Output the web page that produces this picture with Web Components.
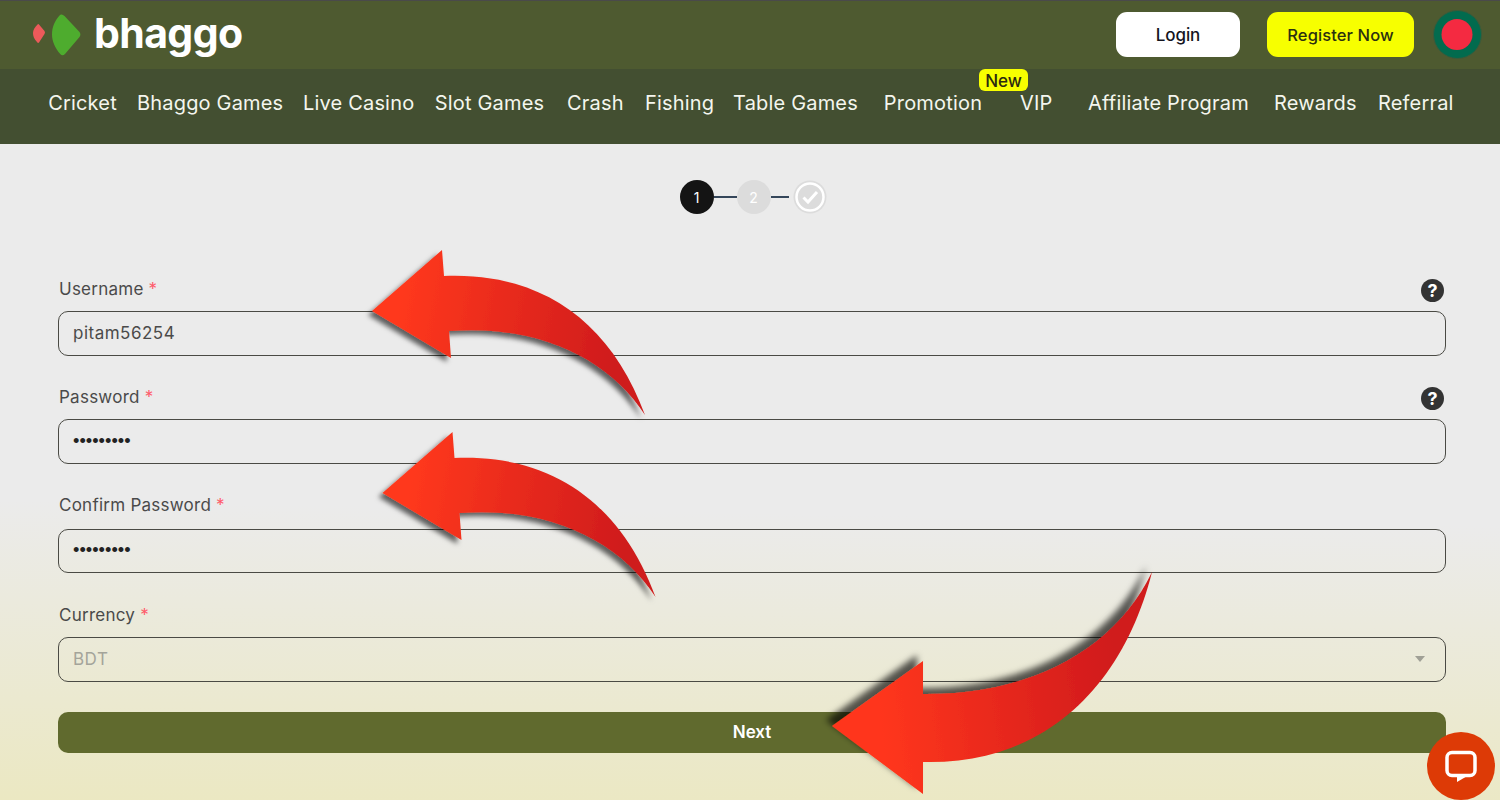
<!DOCTYPE html>
<html>
<head>
<meta charset="utf-8">
<style>
  html, body { margin: 0; height: 100%; overflow: hidden; }
  body { font-family: "Inter", "Liberation Sans", sans-serif; background: #ebebeb; }
  #page { position: relative; width: 1500px; height: 800px; display: flex; flex-direction: column; overflow: hidden; }
</style>
</head>
<body>
<div id="page">
  <bhaggo-header></bhaggo-header>
  <bhaggo-nav>
    <nav-item w="69" ml="48">Cricket</nav-item>
    <nav-item w="146" ml="20">Bhaggo Games</nav-item>
    <nav-item w="111" ml="20">Live Casino</nav-item>
    <nav-item w="111" ml="20">Slot Games</nav-item>
    <nav-item w="56" ml="22">Crash</nav-item>
    <nav-item w="67" ml="22">Fishing</nav-item>
    <nav-item w="125" ml="21">Table Games</nav-item>
    <nav-item w="100" ml="25">Promotion</nav-item>
    <nav-item w="31" ml="37" badge="New">VIP</nav-item>
    <nav-item w="161" ml="37">Affiliate Program</nav-item>
    <nav-item w="79" ml="25">Rewards</nav-item>
    <nav-item w="74" ml="25">Referral</nav-item>
  </bhaggo-nav>
  <signup-form>
    <step-bar></step-bar>
    <form-field label="Username" value="pitam56254" help style="margin-top:64px"></form-field>
    <form-field label="Password" value="•••••••••" secret help style="margin-top:30px"></form-field>
    <form-field label="Confirm Password" value="•••••••••" secret style="margin-top:30px;--h:44px;--top:35px"></form-field>
    <form-field label="Currency" value="BDT" select style="margin-top:31px"></form-field>
    <next-button style="margin-top:30px">Next</next-button>
  </signup-form>
  <red-arrows></red-arrows>
  <chat-bubble></chat-bubble>
</div>

<script>
const FONT = '"Inter", "Liberation Sans", sans-serif';

class BhaggoHeader extends HTMLElement {
  connectedCallback() {
    this.attachShadow({ mode: 'open' }).innerHTML = `
    <style>
      :host { display: flex; align-items: center; height: 68px; background: #4e5a30; border-top: 1px solid #4a4a4a; font-family: ${FONT}; flex: none; }
      .logo { display: flex; align-items: center; margin-left: 33px; }
      .word { color: #fff; font-weight: 700; font-size: 41px; letter-spacing: -0.6px; margin-left: 13px; line-height: 40px; position: relative; top: -2px; }
      .actions { margin-left: auto; display: flex; align-items: center; margin-right: 18px; margin-bottom: 2px; }
      .btn { display: flex; align-items: center; justify-content: center; height: 45px; padding-top: 2px; border-radius: 11px; font-size: 17px; font-weight: 500; color: #14141e; box-sizing: border-box; }
      .login { width: 124px; background: #fff; letter-spacing: -0.1px; }
      .reg { width: 147px; background: #f7ff00; margin-left: 27px; color: #2c3010; font-size: 16.5px; letter-spacing: 0.1px; }
      svg.flag { margin-left: 19px; display: block; }
    </style>
    <div class="logo">
      <svg width="48" height="42" viewBox="0 0 48 42">
        <path d="M6 10.500 L11.500 17 Q12.500 18.500 11.500 20 L6 28.500 Q5 29.500 4 28 C1 25 0 22 0 19 C0 16 2 13 4.500 10.500 Q5.500 9.500 6 10.500 Z" fill="#ec5a5a"/>
        <path d="M28.500 0.500 C29.500 0.500 30.500 1 31.500 2 L46.500 18 C47.700 19.500 47.700 21.500 46.500 23 L32 40 C30.500 41.500 28.500 41.500 27.500 40.300 C22 34 19 27 19 20.500 C19 13 22 6.500 26.500 1.500 C27 1 27.800 0.500 28.500 0.500 Z" fill="#4eac2e"/>
      </svg>
      <span class="word">bhaggo</span>
    </div>
    <div class="actions">
      <div class="btn login">Login</div>
      <div class="btn reg">Register Now</div>
      <svg class="flag" width="49" height="49" viewBox="0 0 49 49">
        <circle cx="24.500" cy="24.500" r="24" fill="#026b4e" stroke="#3c5a3a" stroke-width="1"/>
        <circle cx="24" cy="24.500" r="15.500" fill="#f42a41"/>
      </svg>
    </div>`;
  }
}

class BhaggoNav extends HTMLElement {
  connectedCallback() {
    this.attachShadow({ mode: 'open' }).innerHTML = `
    <style>
      :host { display: flex; align-items: flex-start; height: 75px; background: #434f31; flex: none; font-family: ${FONT}; }
    </style>
    <slot></slot>`;
  }
}

class NavItem extends HTMLElement {
  connectedCallback() {
    const badge = this.getAttribute('badge');
    this.attachShadow({ mode: 'open' }).innerHTML = `
    <style>
      :host { display: block; position: relative; flex: none; white-space: nowrap; color: #f4f6ee; font-size: 20px; letter-spacing: 0.18px; line-height: 24px; padding-top: 22px; text-align: center;
        width: ${this.getAttribute('w')}px; margin-left: ${this.getAttribute('ml')}px; }
      .t { display: inline-block; }
      .badge { position: absolute; left: -41px; top: 0; width: 49px; height: 22px; background: #f7ff00; color: #2a2a10; border-radius: 6px; font-size: 17px; font-weight: 500; letter-spacing: 0; line-height: 24px; text-align: center; }
    </style>
    <span class="t"><slot></slot></span>${badge ? `<span class="badge">${badge}</span>` : ''}`;
  }
}

class SignupForm extends HTMLElement {
  connectedCallback() {
    this.attachShadow({ mode: 'open' }).innerHTML = `
    <style>
      :host { display: block; flex: 1; box-sizing: border-box; padding: 36px 54px 0 58px; font-family: ${FONT};
        background: linear-gradient(181deg, #ebebeb 0%, #ebebeb 56%, #ebe8c2 100%); }
    </style>
    <slot></slot>`;
  }
}

class StepBar extends HTMLElement {
  connectedCallback() {
    this.attachShadow({ mode: 'open' }).innerHTML = `
    <style>
      :host { display: flex; align-items: center; justify-content: center; height: 34px; margin-left: 2px; font-family: ${FONT}; }
      .dot { width: 34px; height: 34px; border-radius: 50%; display: flex; align-items: center; justify-content: center; font-size: 14px; color: #fff; flex: none; }
      .on { background: #141414; }
      .off { background: #dcdcdc; }
      .line { height: 2px; background: #34465a; flex: none; }
      svg { display: block; flex: none; }
    </style>
    <div class="dot on">1</div>
    <div class="line" style="width:23px"></div>
    <div class="dot off">2</div>
    <div class="line" style="width:18px"></div>
    <svg style="margin-left:4px" width="34" height="34" viewBox="0 0 34 34">
      <circle cx="17" cy="17" r="16.500" fill="#dcdcdc"/>
      <circle cx="17" cy="17" r="13.500" fill="#dcdcdc" stroke="#fff" stroke-width="2.500"/>
      <path d="M10.500 17.500 L15 22 L24 12" fill="none" stroke="#fff" stroke-width="3"/>
    </svg>`;
  }
}

class FormField extends HTMLElement {
  connectedCallback() {
    const help = this.hasAttribute('help');
    const select = this.hasAttribute('select');
    const secret = this.hasAttribute('secret');
    this.attachShadow({ mode: 'open' }).innerHTML = `
    <style>
      :host { display: block; font-family: ${FONT}; }
      .top { display: flex; align-items: flex-start; height: var(--top, 33px); padding-left: 1px; color: #4a4a4a; font-size: 17px; letter-spacing: 0.25px; line-height: 22px; }
      .req { color: #ff5a6a; margin-left: 5px; }
      .help { margin-left: auto; margin-right: 2px; width: 23px; height: 23px; margin-top: 1px; border-radius: 50%; background: #333; color: #fff; font-size: 18px; font-weight: 700; letter-spacing: 0; line-height: 23px; text-align: center; }
      .box { display: flex; align-items: center; box-sizing: border-box; height: var(--h, 45px); border: 1px solid #4a4a44; border-radius: 10px; padding: 0 14px 2px; font-size: 17px; letter-spacing: 0.5px; color: ${select ? '#a4a49a' : '#4a4a4a'}; }
      .dots { font-family: "Liberation Sans", sans-serif; font-size: 18.300px; letter-spacing: 0; color: #222; }
      .caret { margin-left: auto; margin-right: 6px; width: 0; height: 0; border-left: 5.500px solid transparent; border-right: 5.500px solid transparent; border-top: 6px solid #a0a096; }
    </style>
    <div class="top"><span>${this.getAttribute('label')}</span><span class="req">*</span>${help ? '<span class="help">?</span>' : ''}</div>
    <div class="box"><span class="${secret ? 'dots' : ''}">${this.getAttribute('value')}</span>${select ? '<span class="caret"></span>' : ''}</div>`;
  }
}

class NextButton extends HTMLElement {
  connectedCallback() {
    this.attachShadow({ mode: 'open' }).innerHTML = `
    <style>
      :host { display: flex; align-items: center; justify-content: center; box-sizing: border-box; height: 41px; padding-bottom: 2px; border-radius: 10px; background: #606a2e; color: #fff; font-size: 17px; font-weight: 600; font-family: ${FONT}; }
    </style>
    <slot></slot>`;
  }
}

class RedArrows extends HTMLElement {
  connectedCallback() {
    this.attachShadow({ mode: 'open' }).innerHTML = `
    <style>
      :host { position: absolute; left: 0; top: 0; width: 1500px; height: 800px; pointer-events: none; }
      svg { display: block; overflow: visible; }
    </style>
    <svg width="1500" height="800" viewBox="0 0 1500 800">
      <defs>
        <linearGradient id="g1" gradientUnits="userSpaceOnUse" x1="400" y1="300" x2="620" y2="340">
          <stop offset="0" stop-color="#ff381c"/><stop offset="1" stop-color="#cf1b1a"/>
        </linearGradient>
        <linearGradient id="g3" gradientUnits="userSpaceOnUse" x1="880" y1="720" x2="1120" y2="690">
          <stop offset="0" stop-color="#ff361a"/><stop offset="1" stop-color="#d01a1a"/>
        </linearGradient>
        <filter id="s1" x="-20%" y="-20%" width="140%" height="140%"><feDropShadow dx="-4" dy="4" stdDeviation="2.500" flood-color="#000" flood-opacity=".6"/></filter>
        <filter id="s3" x="-20%" y="-20%" width="140%" height="140%"><feDropShadow dx="-6" dy="-6" stdDeviation="3" flood-color="#000" flood-opacity=".65"/></filter>
      </defs>
      <path d="M372 311 L442 250 L444 276 C540 272 610 320 645 415 C610 360 540 324 449 331 L451 358 Z" fill="url(#g1)" filter="url(#s1)"/>
      <path d="M372 311 L442 250 L444 276 C540 272 610 320 645 415 C610 360 540 324 449 331 L451 358 Z" fill="url(#g1)" filter="url(#s1)" transform="translate(10.500 182)"/>
      <path d="M832 726 L923 661 L923 694 C1030 695 1115 650 1152 572 C1125 680 1050 765 923 762 L923 794 Z" fill="url(#g3)" filter="url(#s3)"/>
    </svg>`;
  }
}

class ChatBubble extends HTMLElement {
  connectedCallback() {
    this.attachShadow({ mode: 'open' }).innerHTML = `
    <style>
      :host { position: absolute; left: 1427px; top: 732px; width: 68px; height: 68px; border-radius: 50%; background: #dd3a06; display: flex; align-items: center; justify-content: center; }
      svg { display: block; }
    </style>
    <svg width="34" height="34" viewBox="0 0 34 34">
      <rect x="3" y="3.500" width="28" height="23" rx="5" fill="none" stroke="#fff" stroke-width="3.500"/>
      <path d="M13 26 V33 L25 26 Z" fill="#fff"/>
    </svg>`;
  }
}

customElements.define('bhaggo-header', BhaggoHeader);
customElements.define('bhaggo-nav', BhaggoNav);
customElements.define('nav-item', NavItem);
customElements.define('signup-form', SignupForm);
customElements.define('step-bar', StepBar);
customElements.define('form-field', FormField);
customElements.define('next-button', NextButton);
customElements.define('red-arrows', RedArrows);
customElements.define('chat-bubble', ChatBubble);
</script>
</body>
</html>
